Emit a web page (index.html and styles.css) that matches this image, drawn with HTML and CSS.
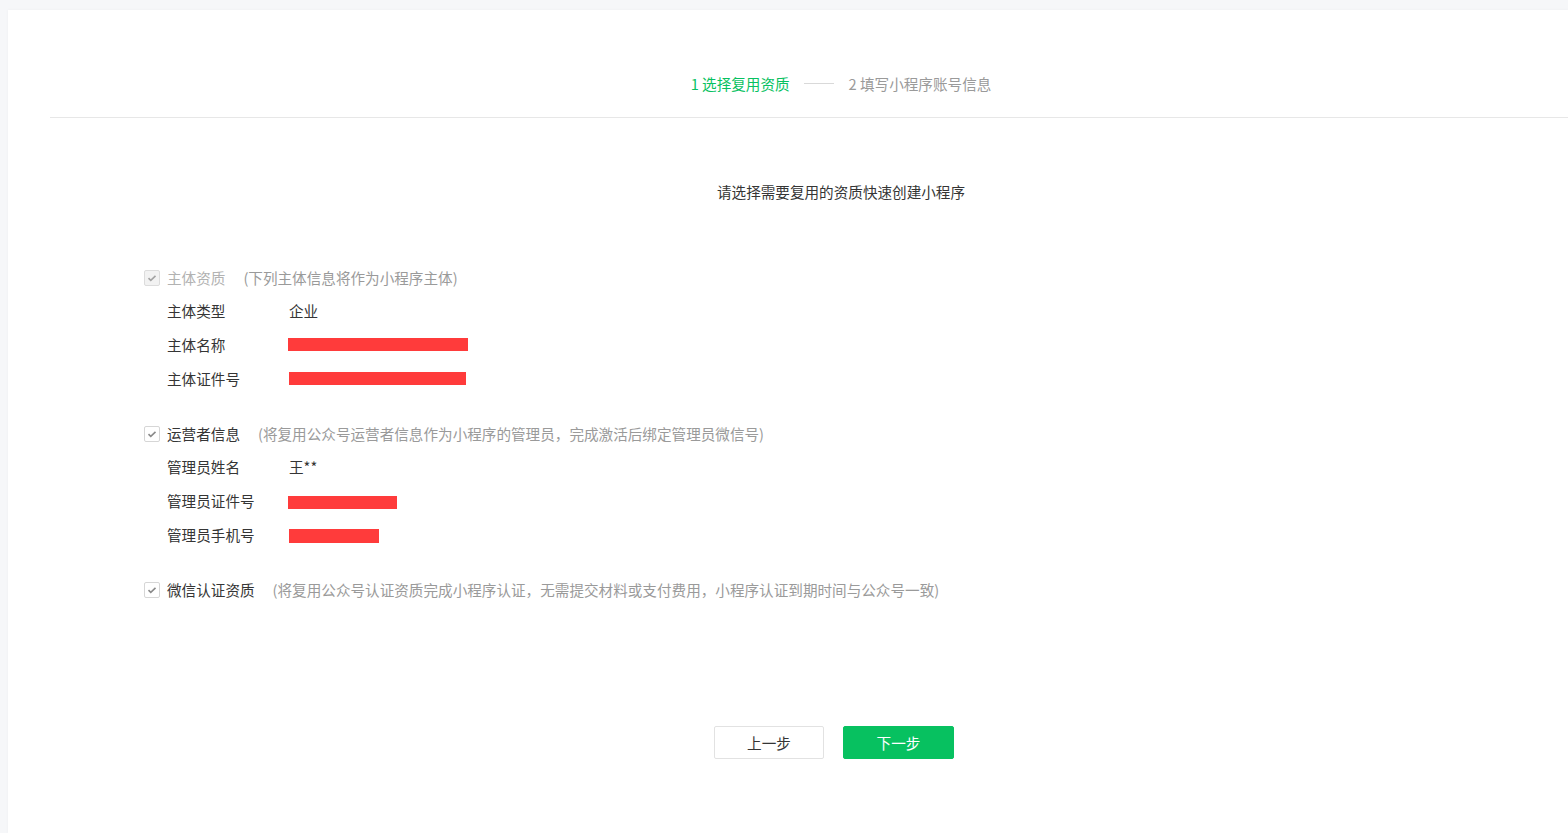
FILE: index.html
```html
<!DOCTYPE html>
<html lang="zh-CN">
<head>
  <meta charset="UTF-8">
  <meta name="viewport" content="width=device-width, initial-scale=1.0">
  <title>复用资质创建小程序</title>
  <link rel="stylesheet" href="styles.css">
</head>
<body>
  <div class="card">
    <div class="inner">
      <!-- Steps -->
      <div class="steps">
        <span class="step active">1 选择复用资质</span>
        <span class="step-line"></span>
        <span class="step">2 填写小程序账号信息</span>
      </div>

      <p class="title">请选择需要复用的资质快速创建小程序</p>

      <!-- 主体资质 -->
      <div class="section first">
        <div class="section-head disabled">
          <span class="checkbox checked"><svg viewBox="0 0 16 16"><path d="M4 8.2l2.6 2.5L12 5.5"/></svg></span>
          <span class="section-title">主体资质</span>
          <span class="hint">(下列主体信息将作为小程序主体)</span>
        </div>
        <div class="row"><span class="label">主体类型</span><span class="value">企业</span></div>
        <div class="row"><span class="label">主体名称</span><span class="value"><span class="mask mask-name"></span></span></div>
        <div class="row"><span class="label">主体证件号</span><span class="value"><span class="mask mask-id"></span></span></div>
      </div>

      <!-- 运营者信息 -->
      <div class="section">
        <div class="section-head">
          <span class="checkbox checked"><svg viewBox="0 0 16 16"><path d="M4 8.2l2.6 2.5L12 5.5"/></svg></span>
          <span class="section-title">运营者信息</span>
          <span class="hint">(将复用公众号运营者信息作为小程序的管理员，完成激活后绑定管理员微信号)</span>
        </div>
        <div class="row"><span class="label">管理员姓名</span><span class="value">王**</span></div>
        <div class="row"><span class="label">管理员证件号</span><span class="value"><span class="mask mask-card"></span></span></div>
        <div class="row"><span class="label">管理员手机号</span><span class="value"><span class="mask mask-phone"></span></span></div>
      </div>

      <!-- 微信认证资质 -->
      <div class="section">
        <div class="section-head">
          <span class="checkbox checked"><svg viewBox="0 0 16 16"><path d="M4 8.2l2.6 2.5L12 5.5"/></svg></span>
          <span class="section-title">微信认证资质</span>
          <span class="hint">(将复用公众号认证资质完成小程序认证，无需提交材料或支付费用，小程序认证到期时间与公众号一致)</span>
        </div>
      </div>

      <div class="actions">
        <button class="btn btn-default">上一步</button>
        <button class="btn btn-primary">下一步</button>
      </div>
    </div>
  </div>
</body>
</html>
```

FILE: styles.css
```css
* {
  margin: 0;
  padding: 0;
  box-sizing: border-box;
  font-family: "Noto Sans CJK SC", "Liberation Sans", sans-serif;
}

html, body {
  height: 100%;
  overflow: hidden;
}

body {
  background-color: #f6f7f9;
  padding: 10px 0 0 8px;
  color: #353535;
  font-size: 14.6px;
}

.card {
  background: #fff;
  height: 100%;
  padding-left: 42px;
  overflow: hidden;
  box-shadow: 0 0 3px rgba(0, 0, 0, 0.04);
}

.inner {
  width: 1582px;
}

.steps {
  display: flex;
  align-items: center;
  justify-content: center;
  height: 108px;
  padding-top: 64px;
  padding-bottom: 24px;
  border-bottom: 1px solid #e7e7e7;
}

.step {
  line-height: 20px;
  color: #9a9a9a;
}

.step.active {
  color: #07c160;
}

.step-line {
  width: 30px;
  height: 1px;
  background: #d9d9d9;
  margin: 0 15px 0 14px;
}

.title {
  text-align: center;
  line-height: 20px;
  margin-top: 64px;
  color: #353535;
}

.section {
  padding-left: 94px;
  margin-top: 28px;
}

.section.first {
  margin-top: 66px;
}

.section-head {
  display: flex;
  align-items: center;
  height: 20px;
  line-height: 20px;
}

.checkbox {
  width: 16px;
  height: 16px;
  border: 1px solid #d6d6d6;
  border-radius: 2px;
  background: #fff;
  margin-right: 7px;
  display: flex;
}

.checkbox svg {
  width: 14px;
  height: 14px;
  fill: none;
  stroke: #8a8a8a;
  stroke-width: 1.8;
}

.section-head.disabled .checkbox {
  background: #f2f2f2;
  border-color: #dcdcdc;
}

.section-head.disabled .checkbox svg {
  stroke: #a3a3a3;
}

.section-head.disabled .section-title {
  color: #b2b2b2;
}

.hint {
  margin-left: 18px;
  color: #9a9a9a;
}

.row {
  display: flex;
  height: 34px;
  line-height: 34px;
  padding-left: 23px;
}

.section-head + .row {
  margin-top: 6px;
}

.label {
  width: 122px;
}

.value {
  display: flex;
  align-items: center;
}

.mask {
  display: block;
  height: 13px;
  background: #ff3b3b;
}

.mask-name {
  width: 180px;
  margin-top: -1px;
  margin-left: -1px;
}

.mask-id {
  width: 177px;
  margin-top: -1px;
}

.mask-card {
  width: 109px;
  margin-top: 3px;
  margin-left: -1px;
}

.mask-phone {
  width: 90px;
  height: 14px;
  margin-top: 1px;
}

.actions {
  display: flex;
  justify-content: center;
  gap: 19px;
  margin-top: 126px;
  padding-right: 14px;
}

.btn {
  width: 110px;
  height: 33px;
  border-radius: 2px;
  font-size: 14.6px;
  cursor: pointer;
}

.btn-default {
  background: #fff;
  border: 1px solid #e2e2e2;
  color: #353535;
}

.btn-primary {
  width: 111px;
  background: #07c160;
  border: 1px solid #07c160;
  color: #fff;
}
```
